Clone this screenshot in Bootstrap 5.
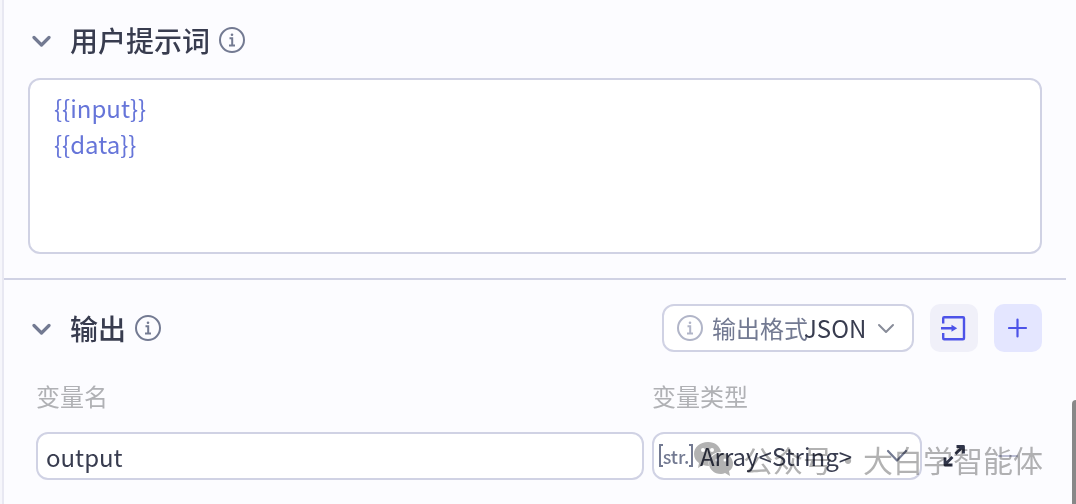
<!DOCTYPE html>
<html lang="zh-CN">
<head>
<meta charset="utf-8">
<meta name="viewport" content="width=device-width, initial-scale=1">
<title>输出</title>
<link href="https://cdn.jsdelivr.net/npm/bootstrap@5.3.0/dist/css/bootstrap.min.css" rel="stylesheet">
<style>
  :root { --line: #d0d2e4; --ink: #383c4f; --soft: #737a92; --accent: #4d53e8; }
  body { background: #f6f6fb; color: var(--ink); font-family: "Noto Sans CJK SC", sans-serif; font-size: 24px; line-height: 36px; overflow: hidden; }
  svg { display: block; flex: none; }
  .panel { background: #fcfcff; border-left: 2px solid #e8e8f2; margin-left: 2px; min-height: 100vh; padding-bottom: 24px; }
  .prompt-part { padding: 16px 24px 24px; margin-right: 10px; border-bottom: 2px solid var(--line); }
  .output-part { padding: 24px 34px 0 24px; }
  .head-row { min-height: 48px; }
  .part-title { font-size: 28px; font-weight: 500; line-height: 48px; margin: 0 9px 0 18px; }
  .plain-btn { background: none; border: 0; padding: 0; color: var(--soft); }
  .boxed { background: #fff; border: 2px solid var(--line); border-radius: 12px; color: var(--ink); }
  .boxed:focus-within { border-color: var(--accent); }
  .prompt-text { display: block; width: 100%; height: 176px; padding: 10px 24px; color: #6675d9; resize: none; outline: 0; margin-top: 14px; }
  .tool-btn { width: 48px; height: 48px; border: 0; border-radius: 10px; background: #f0f0f9; color: var(--accent); }
  .tool-btn.add { background: #e4e6ff; }
  .format-box { height: 48px; padding: 0 16px 0 12px; color: var(--soft); width: 252px; }
  .format-box label { margin-right: -4px; }
  .bare-select { appearance: none; border: 0; background: none; padding: 0; color: var(--ink); outline: 0; line-height: 36px; }
  .col-label { color: #b0b1b5; margin-bottom: 18px; line-height: 36px; display: block; }
  .fields { padding: 26px 0 0 8px; gap: 8px; }
  .name-box { display: block; width: 100%; height: 48px; padding: 0 8px; outline: 0; }
  .type-col { width: 270px; }
  .type-box { height: 48px; padding: 0 12px 0 6px; }
  .str-tag { font-size: 18px; font-weight: 500; line-height: 24px; color: var(--soft); width: 32px; margin-right: 8px; }
  .row-actions { width: 112px; height: 48px; padding: 0 16px 0 12px; }
  .row-actions .remove { margin-right: 8px; }
  .watermark { position: absolute; right: 33px; bottom: 21px; color: #b2b2b2; font-size: 30px; line-height: 48px; mix-blend-mode: multiply; pointer-events: none; white-space: nowrap; }
  .mid-dot { width: 30px; text-align: center; }
  .scroll-thumb { position: absolute; right: 0; top: 400px; bottom: 0; width: 4px; background: #888; border-top-left-radius: 4px; }
</style>
</head>
<body class="position-relative">
<main class="panel">
  <section class="prompt-part">
    <div class="head-row d-flex align-items-center">
      <button class="plain-btn ms-1" type="button" aria-label="收起用户提示词"><svg width="20" height="20" viewBox="0 0 20 20" fill="none" stroke="currentColor" stroke-width="3.2" stroke-linecap="round" stroke-linejoin="round"><path d="M2 7.500 9.500 15 17 7.500"/></svg></button>
      <h2 class="part-title"><label for="prompt">用户提示词</label></h2>
      <button class="plain-btn" type="button" aria-label="说明"><svg width="26" height="26" viewBox="0 0 26 26" fill="none" stroke="currentColor" stroke-width="2"><circle cx="13" cy="13" r="12"/><path d="M10.500 11.200h2.700v7M10 18.500h6"/><circle cx="13" cy="7.800" r="1.300" fill="currentColor" stroke="none"/></svg></button>
    </div>
    <textarea id="prompt" class="boxed prompt-text">{{input}}
{{data}}</textarea>
  </section>

  <section class="output-part">
    <div class="head-row d-flex align-items-center">
      <button class="plain-btn ms-1" type="button" aria-label="收起输出"><svg width="20" height="20" viewBox="0 0 20 20" fill="none" stroke="currentColor" stroke-width="3.2" stroke-linecap="round" stroke-linejoin="round"><path d="M2 7.500 9.500 15 17 7.500"/></svg></button>
      <h2 class="part-title">输出</h2>
      <button class="plain-btn" type="button" aria-label="说明"><svg width="26" height="26" viewBox="0 0 26 26" fill="none" stroke="currentColor" stroke-width="2"><circle cx="13" cy="13" r="12"/><path d="M10.500 11.200h2.700v7M10 18.500h6"/><circle cx="13" cy="7.800" r="1.300" fill="currentColor" stroke="none"/></svg></button>
      <div class="d-flex align-items-center gap-3 ms-auto">
        <div class="boxed format-box d-flex align-items-center">
          <svg class="me-2" width="28" height="26" viewBox="0 0 28 26" fill="none" stroke="#b1b5c8" stroke-width="2"><circle cx="14" cy="13" r="12"/><path d="M11.500 11.200h2.700v7M11 18.500h6"/><circle cx="14" cy="7.800" r="1.300" fill="#b1b5c8" stroke="none"/></svg>
          <label for="format" class="text-nowrap">输出格式</label>
          <select id="format" class="bare-select"><option>JSON</option></select>
          <svg class="ms-auto" width="20" height="20" viewBox="0 0 20 20" fill="none" stroke="#888c99" stroke-width="2" stroke-linecap="round" stroke-linejoin="round"><path d="M3 7 10 14 17 7"/></svg>
        </div>
        <button class="tool-btn d-flex align-items-center justify-content-center" type="button" aria-label="导入"><svg width="26" height="26" viewBox="1 0 26 26" fill="none" stroke="currentColor" stroke-width="2.400"><path d="M3.200 8.500V3.200q0-1 1-1H23q1 0 1 1v20q0 1-1 1H4.200q-1 0-1-1v-5.300M1 13.200h12" stroke-linejoin="round"/><path d="M11.500 9.700v7l5.700-3.500z" fill="currentColor" stroke="none"/></svg></button>
        <button class="tool-btn add d-flex align-items-center justify-content-center" type="button" aria-label="新增"><svg width="20" height="20" viewBox="0 0 20 20" stroke="currentColor" stroke-width="2.200" stroke-linecap="round"><path d="M9.500 1.500v17M1 10h17"/></svg></button>
      </div>
    </div>

    <div class="fields d-flex">
      <div class="flex-grow-1">
        <label class="col-label" for="varname">变量名</label>
        <input id="varname" class="boxed name-box" type="text" value="output">
      </div>
      <div class="type-col">
        <label class="col-label" for="vartype">变量类型</label>
        <div class="boxed type-box d-flex align-items-center">
          <span class="str-tag d-flex align-items-center justify-content-center"><svg width="4" height="26" viewBox="0 0 4 26" fill="none" stroke="currentColor" stroke-width="2"><path d="M4 2H1v21h3"/></svg>str.<svg width="4" height="26" viewBox="0 0 4 26" fill="none" stroke="currentColor" stroke-width="2"><path d="M0 2h3v21H0"/></svg></span>
          <select id="vartype" class="bare-select"><option>Array&lt;String&gt;</option></select>
          <svg class="ms-auto" width="22" height="20" viewBox="0 0 22 20" fill="none" stroke="#737a92" stroke-width="2.200" stroke-linecap="round" stroke-linejoin="round"><path d="M2 5 11 14.500 20 5"/></svg>
        </div>
      </div>
      <div class="row-actions d-flex align-items-center justify-content-between align-self-end">
        <button class="plain-btn" type="button" aria-label="展开"><svg width="24" height="24" viewBox="0 0 24 24" fill="none" stroke="#30354a" stroke-width="2.800" stroke-linejoin="round"><path d="M13.500 10 21 2.500M14.500 2.500h7v7M10.500 13 3 20.500M3 13.500v7.500h7.500"/></svg></button>
        <button class="plain-btn remove" type="button" aria-label="删除" disabled><svg width="20" height="20" viewBox="0 0 20 20" stroke="#bcbed4" stroke-width="2" stroke-linecap="round"><path d="M1 10h18"/></svg></button>
      </div>
    </div>
  </section>
</main>
<div class="watermark d-flex align-items-center"><svg class="me-2" width="42" height="36" viewBox="0 0 42 36"><path fill="#b2b2b2" fill-rule="evenodd" d="M15 1C7 1 1 6 1 13c0 4 2 7 5 9l-1 5 5-3q3 1 6 1C14 17 20 11 28 11 27 5 22 1 15 1zM10 7a2 2 0 1 1 0 4 2 2 0 0 1 0-4zM19 7a2 2 0 1 1 0 4 2 2 0 0 1 0-4z"/><path fill="#b2b2b2" fill-rule="evenodd" d="M28 12c-7 0-12 5-12 10.500S21 33 28 33q2 0 4-1l5 3-1-5c3-2 4-4 4-7.500C40 17 35 12 28 12zM24 17.500a1.500 1.500 0 1 1 0 3 1.500 1.500 0 0 1 0-3zM32 17.500a1.500 1.500 0 1 1 0 3 1.500 1.500 0 0 1 0-3z"/></svg><span>公众号</span><span class="mid-dot">·</span><span>大白学智能体</span></div>
<div class="scroll-thumb"></div>
<script src="https://cdn.jsdelivr.net/npm/bootstrap@5.3.0/dist/js/bootstrap.bundle.min.js"></script>
</body>
</html>
